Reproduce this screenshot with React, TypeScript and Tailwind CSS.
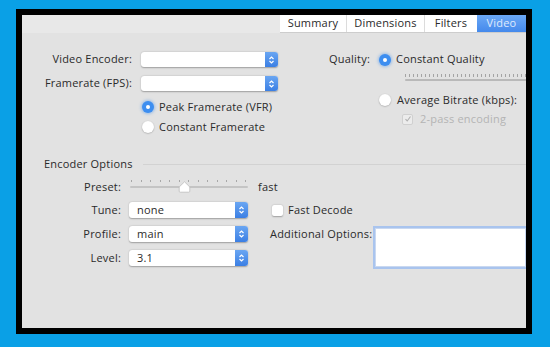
function Stepper() {
  return (
    <div className="flex h-full w-[13px] items-center justify-center rounded-r-[3px] bg-gradient-to-b from-[#6aa6f2] to-[#3b7fe4]">
      <svg width="7" height="10" viewBox="0 0 7 10" fill="none">
        <polyline points="1.5,4 3.5,2 5.5,4" stroke="#fff" strokeWidth="1.2" />
        <polyline points="1.5,6 3.5,8 5.5,6" stroke="#fff" strokeWidth="1.2" />
      </svg>
    </div>
  );
}

function Popup({ value, width }: { value?: string; width: string }) {
  return (
    <div
      className={`flex h-full items-stretch rounded-[3px] bg-white shadow-[0_0.5px_1.5px_rgba(0,0,0,0.3)] ${width}`}
    >
      <div className="flex flex-1 items-center pl-[8px] text-[#2b2b2b]">{value}</div>
      <Stepper />
    </div>
  );
}

function Radio({ on }: { on?: boolean }) {
  if (on) {
    return (
      <div className="flex h-[12px] w-[12px] shrink-0 items-center justify-center rounded-full bg-[#3d8ef0] shadow-[0_0_3px_1px_rgba(61,142,240,0.45)]">
        <div className="h-[4px] w-[4px] rounded-full bg-white" />
      </div>
    );
  }
  return (
    <div className="h-[12px] w-[12px] shrink-0 rounded-full bg-white shadow-[0_0.5px_1.5px_rgba(0,0,0,0.3)]" />
  );
}

export default function App() {
  const qualityTicks = Array.from({ length: 32 }, (_, i) => i);
  const presetTicks = Array.from({ length: 13 }, (_, i) => i);

  return (
    <div
      className="h-[347px] w-[550px] whitespace-nowrap bg-[#0aa0e6] pl-[16px] pt-[9px] text-[11px] tracking-[0.2px] text-[#2a2a2a]"
      style={{ fontFamily: '"Open Sans", "Liberation Sans", sans-serif' }}
    >
      <div className="h-[325px] w-[516px] border-[6px] border-black">
        <div className="flex h-full w-full flex-col overflow-hidden bg-[#e2e2e2]">
          {/* tabs */}
          <div className="flex h-[18px] w-full bg-[#e8e8e8]">
            <div className="ml-[258px] flex h-full w-[246px] border-b border-[#cdcdcd] bg-white">
              <div className="flex w-[67px] items-center justify-center border-r border-[#dcdcdc]">Summary</div>
              <div className="flex w-[78px] items-center justify-center border-r border-[#dcdcdc]">Dimensions</div>
              <div className="flex w-[52px] items-center justify-center">Filters</div>
              <div className="flex w-[49px] items-center justify-center bg-gradient-to-b from-[#6ba8f5] to-[#4489ec] text-[#dfeafd]">
                Video
              </div>
            </div>
          </div>

          {/* top section */}
          <div className="mt-[19px] flex">
            <div className="flex w-[256px] flex-col">
              <div className="flex h-[15px] items-center">
                <div className="w-[110px] text-right">Video Encoder:</div>
                <div className="ml-[9px] h-full">
                  <Popup width="w-[137px]" />
                </div>
              </div>
              <div className="mt-[9px] flex h-[15px] items-center">
                <div className="w-[110px] text-right">Framerate (FPS):</div>
                <div className="ml-[9px] h-full">
                  <Popup width="w-[137px]" />
                </div>
              </div>
              <div className="ml-[120px] mt-[10px] flex h-[12px] items-center gap-[5px]">
                <Radio on />
                <span>Peak Framerate (VFR)</span>
              </div>
              <div className="ml-[120px] mt-[8px] flex h-[12px] items-center gap-[5px]">
                <Radio />
                <span>Constant Framerate</span>
              </div>
            </div>

            <div className="ml-[22px] flex flex-1 flex-col">
              <div className="flex h-[15px] items-center">
                <div className="w-[70px] text-right">Quality:</div>
                <div className="ml-[9px] flex items-center gap-[5px]">
                  <Radio on />
                  <span>Constant Quality</span>
                </div>
              </div>
              <div className="ml-[105px] mt-[7px] flex flex-col">
                <div className="flex h-[3px] gap-[3px] overflow-hidden">
                  {qualityTicks.map((t) => (
                    <div key={t} className="h-[3px] w-[1px] shrink-0 bg-[#a4a4a4]" />
                  ))}
                </div>
                <div className="mt-[2px] h-[2px] w-full rounded-full bg-[#b9b9b9]" />
              </div>
              <div className="ml-[79px] mt-[12px] flex h-[14px] items-center gap-[6px]">
                <Radio />
                <span>Average Bitrate (kbps):</span>
              </div>
              <div className="ml-[102px] mt-[6px] flex h-[12px] items-center gap-[7px] text-[#b4b4b4]">
                <div className="flex h-[11px] w-[11px] items-center justify-center rounded-[2px] border border-[#d0d0d0] bg-[#ececec]">
                  <svg width="8" height="8" viewBox="0 0 8 8" fill="none">
                    <polyline points="1.5,4.2 3.2,6 6.5,1.5" stroke="#b0b0b0" strokeWidth="1.1" />
                  </svg>
                </div>
                <span>2-pass encoding</span>
              </div>
            </div>
          </div>

          {/* encoder options header */}
          <div className="mt-[24px] flex h-[14px] items-center pl-[22px]">
            <span>Encoder Options</span>
            <div className="ml-[10px] h-[1px] flex-1 bg-[#d2d2d2]" />
          </div>

          {/* preset */}
          <div className="mt-[9px] flex h-[14px] items-center">
            <div className="w-[99px] text-right">Preset:</div>
            <div className="relative ml-[9px] h-full w-[118px]">
              <div className="absolute left-[1px] right-[2px] top-[0px] flex justify-between">
                {presetTicks.map((t) => (
                  <div key={t} className="h-[2px] w-[1px] bg-[#a8a8a8]" />
                ))}
              </div>
              <div className="absolute left-0 right-0 top-[6px] h-[2px] rounded-full bg-[#c4c4c4]" />
              <svg className="absolute left-[48px] top-[1px]" width="13" height="12" viewBox="0 0 13 12">
                <path
                  d="M6.5 0.8 L11.8 6 L11.8 10.2 Q11.8 11.2 10.8 11.2 L2.2 11.2 Q1.2 11.2 1.2 10.2 L1.2 6 Z"
                  fill="#fff"
                  stroke="#bdbdbd"
                  strokeWidth="0.8"
                />
              </svg>
            </div>
            <span className="ml-[10px]">fast</span>
          </div>

          {/* bottom section */}
          <div className="mt-[8px] flex">
            <div className="flex w-[226px] flex-col gap-[8px]">
              <div className="flex h-[16px] items-center">
                <div className="w-[99px] text-right">Tune:</div>
                <div className="ml-[8px] h-full">
                  <Popup value="none" width="w-[119px]" />
                </div>
              </div>
              <div className="flex h-[16px] items-center">
                <div className="w-[99px] text-right">Profile:</div>
                <div className="ml-[8px] h-full">
                  <Popup value="main" width="w-[119px]" />
                </div>
              </div>
              <div className="flex h-[16px] items-center">
                <div className="w-[99px] text-right">Level:</div>
                <div className="ml-[8px] h-full">
                  <Popup value="3.1" width="w-[119px]" />
                </div>
              </div>
            </div>

            <div className="ml-[22px] flex flex-1 flex-col">
              <div className="flex h-[16px] items-center">
                <div className="ml-[2px] h-[11px] w-[11px] rounded-[2px] bg-white shadow-[0_0.5px_1.5px_rgba(0,0,0,0.3)]" />
                <span className="ml-[5px]">Fast Decode</span>
              </div>
              <div className="mt-[8px] flex items-start">
                <div className="w-[98px] leading-[16px]">Additional Options:</div>
                <div className="ml-[5px] h-[43px] flex-1 border-2 border-r-0 border-[#a9c4ee] bg-white shadow-[inset_0_0_0_1px_#c9d8f0]" />
              </div>
            </div>
          </div>
        </div>
      </div>
    </div>
  );
}
